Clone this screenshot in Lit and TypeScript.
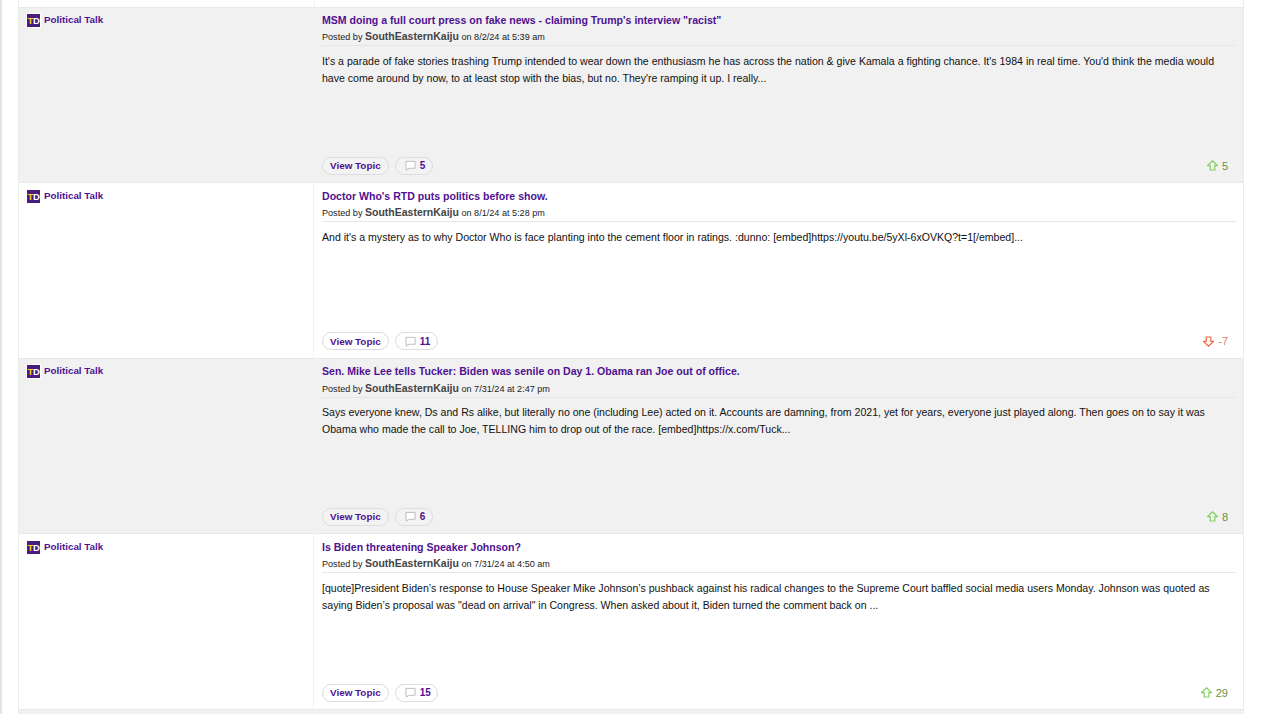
import { LitElement, html, css, svg } from "lit";
import { customElement } from "lit/decorators.js";

interface Post { title: string; by: string; date: string; body: string; replies: number; score: number; }

const posts: Post[] = [
  { title: `MSM doing a full court press on fake news - claiming Trump's interview "racist"`, by: "SouthEasternKaiju", date: "8/2/24 at 5:39 am", body: `It's a parade of fake stories trashing Trump intended to wear down the enthusiasm he has across the nation & give Kamala a fighting chance. It's 1984 in real time. You'd think the media would have come around by now, to at least stop with the bias, but no. They're ramping it up. I really...`, replies: 5, score: 5 },
  { title: `Doctor Who's RTD puts politics before show.`, by: "SouthEasternKaiju", date: "8/1/24 at 5:28 pm", body: `And it's a mystery as to why Doctor Who is face planting into the cement floor in ratings. :dunno: [embed]https://youtu.be/5yXl-6xOVKQ?t=1[/embed]...`, replies: 11, score: -7 },
  { title: `Sen. Mike Lee tells Tucker: Biden was senile on Day 1. Obama ran Joe out of office.`, by: "SouthEasternKaiju", date: "7/31/24 at 2:47 pm", body: `Says everyone knew, Ds and Rs alike, but literally no one (including Lee) acted on it. Accounts are damning, from 2021, yet for years, everyone just played along. Then goes on to say it was Obama who made the call to Joe, TELLING him to drop out of the race. [embed]https://x.com/Tuck...`, replies: 6, score: 8 },
  { title: `Is Biden threatening Speaker Johnson?`, by: "SouthEasternKaiju", date: "7/31/24 at 4:50 am", body: `[quote]President Biden’s response to House Speaker Mike Johnson’s pushback against his radical changes to the Supreme Court baffled social media users Monday. Johnson was quoted as saying Biden’s proposal was "dead on arrival" in Congress. When asked about it, Biden turned the comment back on ...`, replies: 15, score: 29 },
];

const bubble = svg`<svg class="bubble" viewBox="0 0 12 12" width="11" height="11"><path d="M1 1.5H11V9H4.5L1.5 11V9H1Z" fill="#fff" stroke="#a8a8a8" stroke-width="0.8" stroke-linejoin="round"/></svg>`;
const arrow = svg`<path d="M5.5 0.8L10.4 5.6H7.8V10H3.2V5.6H0.6Z" fill="none" stroke="currentColor" stroke-width="1.2" stroke-linejoin="miter"/>`;

@customElement("app-root")
export class AppRoot extends LitElement {
  static styles = css`
    :host { display: block; width: 1280px; height: 714px; overflow: hidden; background: #fff; font-family: "Liberation Sans", Arial, sans-serif; color: #111; }
    .page { height: 714px; padding-left: 16px; box-sizing: border-box; display: flex; flex-direction: column; border-left: 2px solid #e4e4e4; }
    .list { width: 1226px; border-right: 1px solid #ececec; flex: 1; overflow: hidden; box-sizing: border-box; }
    .top { height: 6.6px; box-shadow: inset 1px 0 0 #ececec; display: flex; }
    .top .l { width: 296px; border-right: 1px solid #f3f3f3; }
    .row { height: 175.6px; display: flex; box-sizing: border-box; border-top: 1px solid #e9e9e9; border-left: 1px solid #ececec; }
    .row.alt, .foot { background: #f1f1f1; }
    .left { width: 295px; flex: none; box-sizing: border-box; padding: 5.4px 0 0 8px; display: flex; gap: 4px; align-items: flex-start; border-right: 1px solid #f3f3f3; }
    .row.alt .left { border-right-color: #f1f1f1; }
    .logo { width: 13px; height: 13px; background: #461d7c; margin-top: 1px; color: #fff; font: bold 9.5px/13px "Liberation Sans", sans-serif; display: flex; justify-content: center; letter-spacing: -0.3px; outline: 1px solid #fff; }
    .logo b { color: #fdd023; font-weight: bold; }
    .cat { font-size: 9.8px; font-weight: bold; color: #4f1192; line-height: 13px; }
    .main { flex: 1; min-width: 0; box-sizing: border-box; padding: 5.4px 7px 0 8px; display: flex; flex-direction: column; height: 100%; }
    .title { font-size: 10.57px; font-weight: bold; color: #4f1192; line-height: 15px; }
    .meta { font-size: 9.1px; line-height: 14px; margin-top: 1.5px; padding-bottom: 1px; border-bottom: 1px solid #e6e6e6; color: #222; }
    .meta b { font-size: 10.5px; color: #444; }
    .body { font-size: 10.57px; line-height: 17px; margin-top: 6.5px; flex: 1; color: #111; }
    .bar { display: flex; align-items: center; gap: 6.5px; height: 18px; margin-bottom: 7.4px; }
    .pill { height: 18px; box-sizing: border-box; border: 1px solid #ddd; border-radius: 9px; background: #fff; font-size: 9.9px; font-weight: bold; color: #4f1192; display: flex; align-items: center; gap: 3.5px; padding: 0 7px; }
    .pill.c { padding: 0 6.5px 0 9px; font-size: 10px; }
    .alt .pill { background: #f3f3f3; }
    .bubble { display: block; }
    .score { margin-left: auto; display: flex; align-items: center; gap: 4px; font-size: 11px; padding-right: 8px; }
    .score svg { display: block; }
    .up { color: #5f9441; }
    .up svg { color: #84d162; }
    .down { color: #e07a70; }
    .down svg { color: #ef6a4a; }
    .flip { transform: rotate(180deg); }
    .foot { height: 6px; border-left: 1px solid #ececec; border-top: 1px solid #e9e9e9; }
  `;

  private renderRow(p: Post, i: number) {
    const up = p.score >= 0;
    return html`<div class="row ${i % 2 === 0 ? "alt" : ""}">
      <div class="left">
        <div class="logo"><b>T</b>D</div>
        <div class="cat">Political Talk</div>
      </div>
      <div class="main">
        <div class="title">${p.title}</div>
        <div class="meta">Posted by <b>${p.by}</b> on ${p.date}</div>
        <div class="body">${p.body}</div>
        <div class="bar">
          <div class="pill">View Topic</div>
          <div class="pill c">${bubble}<span>${p.replies}</span></div>
          <div class="score ${up ? "up" : "down"}">
            <svg class=${up ? "" : "flip"} viewBox="0 0 11 11" width="11" height="11">${arrow}</svg>
            <span>${p.score}</span>
          </div>
        </div>
      </div>
    </div>`;
  }

  render() {
    return html`<div class="page"><div class="list">
      <div class="top"><div class="l"></div></div>
      ${posts.map((p, i) => this.renderRow(p, i))}
      <div class="foot"></div>
    </div></div>`;
  }
}
